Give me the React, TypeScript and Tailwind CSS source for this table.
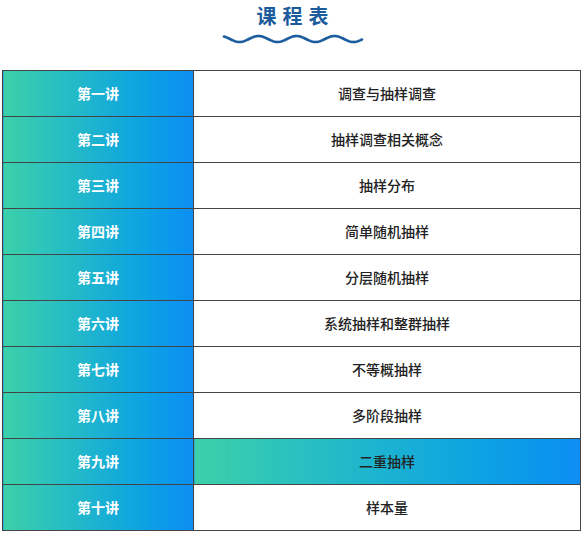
import React from "react";

const rows = [
  ["第一讲", "调查与抽样调查"],
  ["第二讲", "抽样调查相关概念"],
  ["第三讲", "抽样分布"],
  ["第四讲", "简单随机抽样"],
  ["第五讲", "分层随机抽样"],
  ["第六讲", "系统抽样和整群抽样"],
  ["第七讲", "不等概抽样"],
  ["第八讲", "多阶段抽样"],
  ["第九讲", "二重抽样"],
  ["第十讲", "样本量"],
];

function wavePath() {
  const pts: string[] = [];
  const w = 138;
  for (let x = 0; x <= w; x += 1) {
    const y = 5 + 3 * Math.sin(((x - 6) / 38) * Math.PI * 2);
    pts.push(`${x === 0 ? "M" : "L"}${x + 2},${y.toFixed(2)}`);
  }
  return pts.join(" ");
}

export default function App() {
  const font = { fontFamily: '"Noto Sans CJK SC", "Noto Sans", sans-serif' };
  return (
    <div className="w-[585px] h-[535px] bg-white" style={font}>
      <div className="h-[70px] flex flex-col items-center">
        <div className="mt-[2px] text-[20px] leading-[28px] font-bold text-[#1b5b9b] tracking-[6px] pl-[6px]">
          课程表
        </div>
        <svg width="142" height="12" viewBox="0 0 142 12" className="mt-[4px] ml-[1px]">
          <path d={wavePath()} fill="none" stroke="#1a5c9d" strokeWidth="2.6" strokeLinecap="round" />
        </svg>
      </div>
      <table className="ml-[2px] w-[579px] border-collapse">
        <tbody>
          {rows.map(([a, b], i) => (
            <tr key={a} className="h-[46px]">
              <td className="w-[191px] border border-[#444] bg-gradient-to-r from-[#3cd0a9] to-[#0d8ef3] text-center text-white font-bold text-[14px] p-0">
                {a}
              </td>
              <td
                className={
                  "border border-[#444] text-center text-[14px] text-[#222] font-medium p-0 " +
                  (i === 8 ? "bg-gradient-to-r from-[#3cd0a9] to-[#0d8ef3]" : "bg-white")
                }
              >
                {b}
              </td>
            </tr>
          ))}
        </tbody>
      </table>
    </div>
  );
}
